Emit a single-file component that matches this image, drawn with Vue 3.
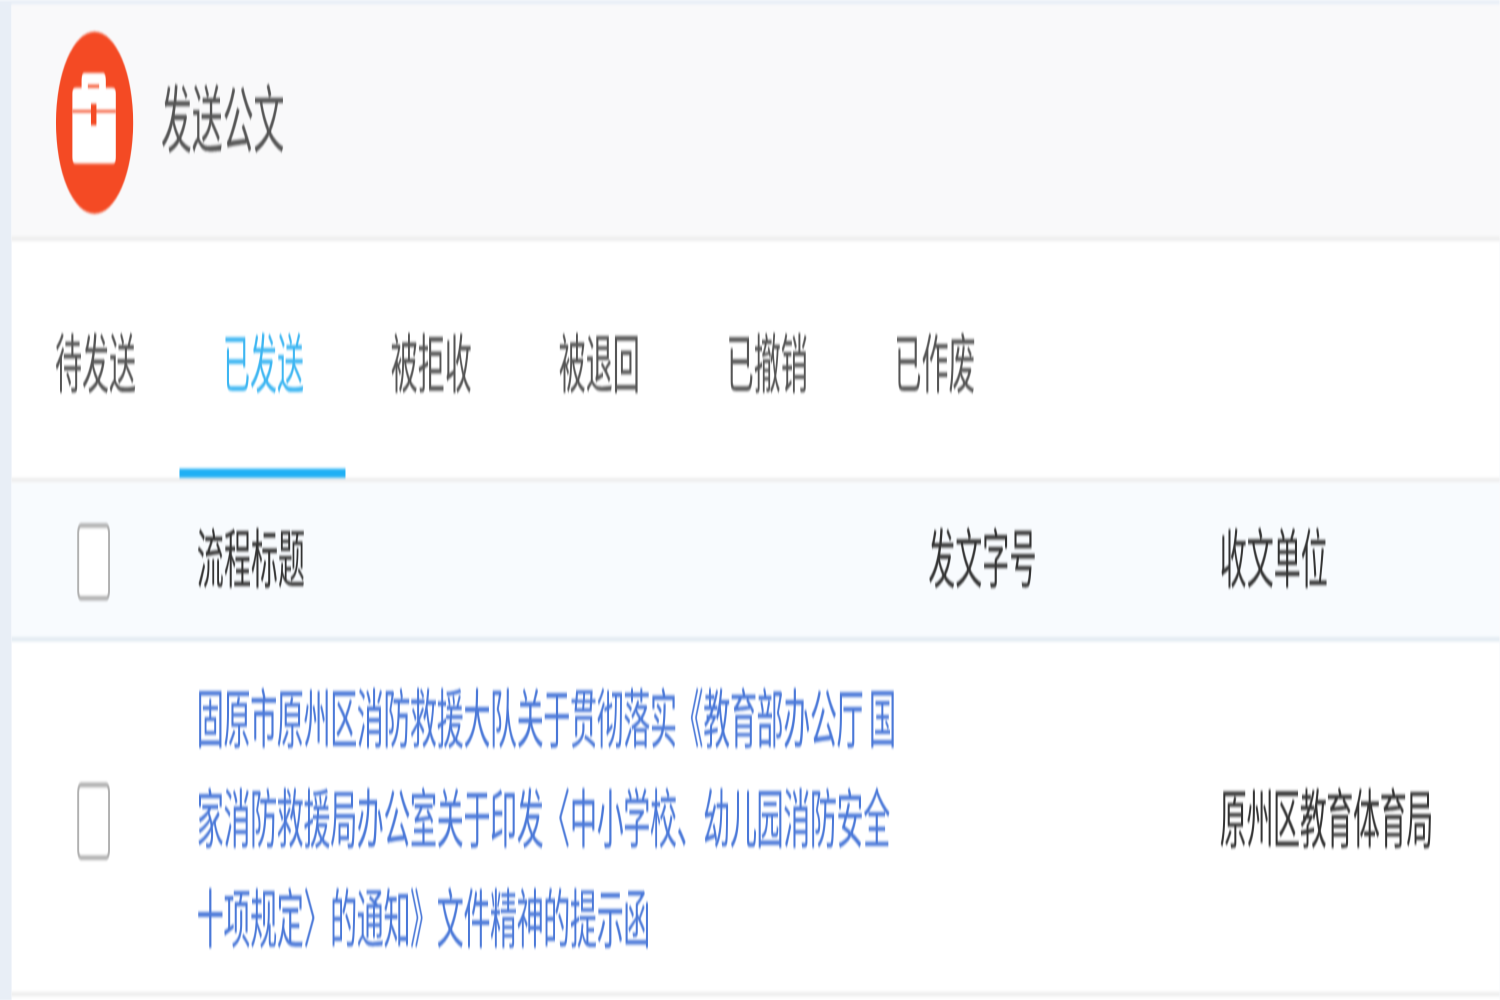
<script setup>
const tabs = ['待发送', '已发送', '被拒收', '被退回', '已撤销', '已作废']
const activeTab = 1
</script>

<template>
  <div class="viewport">
    <div class="stage">
      <div class="main">
        <header class="head">
          <div class="badge">
            <svg class="case" viewBox="0 0 23 22" width="23.3" height="20" preserveAspectRatio="none">
              <path fill="#fff" d="M5.2 4V1.6Q5.2 0 7 0h8.8q1.8 0 1.8 1.6V4h-3.4V2.9H8.4V4z" />
              <path fill="#fff" d="M2.5 3.6h18q2.3 0 2.3 1.2V20.6q0 1.4-2 1.4H2.5q-2 0-2-1.4V4.8q0-1.2 2-1.2z" />
              <rect fill="#f44a24" x="0.5" y="9" width="22.3" height="0.6" />
              <rect fill="#f44a24" x="10" y="7.5" width="2.8" height="5.2" />
            </svg>
          </div>
          <h1 class="title">发送公文</h1>
        </header>

        <nav class="tabs">
          <div
            v-for="(t, i) in tabs"
            :key="t"
            class="tab"
            :class="{ active: i === activeTab }"
          >{{ t }}</div>
        </nav>

        <div class="grid thead">
          <div class="check-cell"><span class="check"></span></div>
          <div class="hcell">流程标题</div>
          <div class="hcell">发文字号</div>
          <div class="hcell">收文单位</div>
        </div>

        <div class="grid trow">
          <div class="check-cell"><span class="check"></span></div>
          <div class="link">固原市原州区消防救援大队关于贯彻落实《教育部办公厅 国<br />家消防救援局办公室关于印发〈中小学校、幼儿园消防安全<br />十项规定〉的通知》文件精神的提示函</div>
          <div></div>
          <div class="unit">原州区教育体育局</div>
        </div>
      </div>
    </div>
  </div>
</template>

<style>
html, body { margin: 0; background: #fff; overflow: hidden; }
</style>

<style scoped>
.viewport {
  width: 1500px;
  height: 1000px;
  overflow: hidden;
}
.stage {
  width: 777.2px;
  height: 220px;
  box-sizing: border-box;
  padding: 0.66px 0 0 6px;
  background: #e8eef6;
  transform: scale(1.93, 4.55);
  transform-origin: 0 0;
  filter: blur(0.4px);
  font-family: "Noto Sans CJK SC", "Noto Sans", sans-serif;
  font-size: 14px;
  font-weight: 400;
  color: #333;
}
.main {
  background: #fff;
  height: 100%;
}
.head {
  height: 51.2px;
  display: flex;
  align-items: center;
  gap: 14.4px;
  padding-left: 23px;
  background: #f9f9fa;
  border-bottom: 1px solid #eeeeee;
}
.badge {
  width: 40px;
  height: 40px;
  margin-top: 0.9px;
  border-radius: 50%;
  background: #f44a24;
  display: flex;
  align-items: center;
  justify-content: center;
}
.case { display: block; margin-left: -0.8px; margin-top: -1.4px; }
.title {
  margin: 0 0 1.8px;
  font-size: 16px;
  font-weight: 400;
  color: #555;
}
.tabs {
  display: flex;
  height: 52.3px;
  border-bottom: 1px solid #eeeeee;
}
.tab {
  position: relative;
  width: 87px;
  padding-left: 22.5px;
  box-sizing: border-box;
  line-height: 52.3px;
  color: #555;
}
.tab.active { color: #3db6f2; }
.tab.active::after {
  content: "";
  position: absolute;
  left: 0;
  bottom: 0;
  width: 86.4px;
  height: 2.4px;
  background: #1fb0f5;
}
.grid {
  display: grid;
  grid-template-columns: 96px 379px 151px 1fr;
  align-items: center;
}
.thead {
  height: 33.8px;
  background: #f8fbfe;
  border-bottom: 1.5px solid #e3ebf2;
}
.thead .check { margin-top: 0.7px; }
.hcell { padding-bottom: 2.8px; }
.trow {
  height: 76.7px;
  line-height: 22px;
  border-bottom: 1px solid #eeeeee;
}
.trow .check { margin-top: 2px; }
.check-cell { padding-left: 34px; display: flex; }
.check {
  width: 17px;
  height: 16.5px;
  box-sizing: border-box;
  background: #fff;
  border: 1px solid #b0b0b0;
  border-radius: 2px;
}
.link { color: #4a78d8; white-space: nowrap; letter-spacing: -0.19px; }
.unit { letter-spacing: -0.19px; }
</style>
